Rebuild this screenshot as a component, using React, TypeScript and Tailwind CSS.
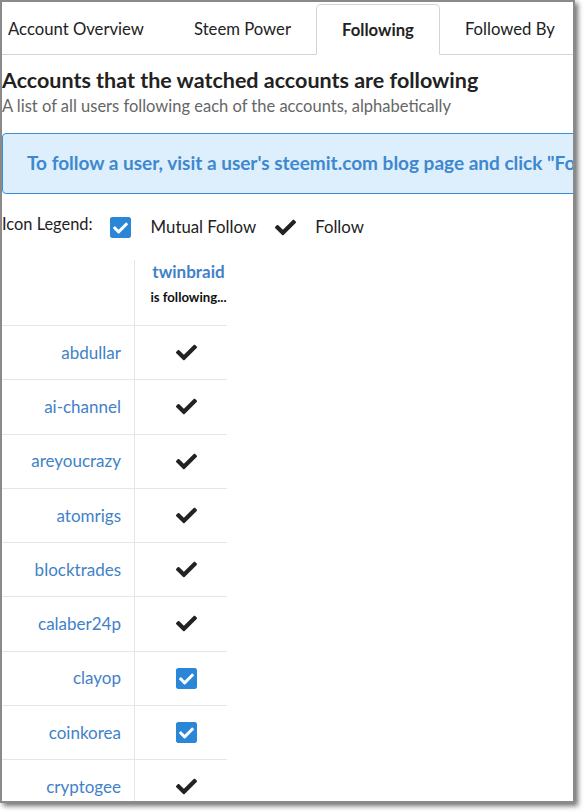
import React from "react";

const CHECK =
  "M173.898 439.404l-166.4-166.4c-9.997-9.997-9.997-26.206 0-36.204l36.203-36.204c9.997-9.998 26.207-9.998 36.204 0L192 312.69 432.095 72.596c9.997-9.997 26.207-9.997 36.204 0l36.203 36.204c9.997 9.997 9.997 26.206 0 36.204l-294.4 294.401c-9.998 9.997-26.207 9.997-36.204-.001z";
const CHECK_SQUARE =
  "M400 480H48c-26.51 0-48-21.49-48-48V80c0-26.51 21.49-48 48-48h352c26.51 0 48 21.49 48 48v352c0 26.51-21.490 48-48 48zm-204.686-98.059l184-184c6.248-6.248 6.248-16.379 0-22.627l-22.627-22.627c-6.248-6.248-16.379-6.249-22.628 0L184 302.745l-70.059-70.059c-6.248-6.248-16.379-6.248-22.628 0l-22.627 22.627c-6.248 6.248-6.248 16.379 0 22.627l104 104c6.249 6.25 16.379 6.25 22.628.001z";

function Check() {
  return (
    <svg width="21" height="21" viewBox="0 0 512 512" className="block">
      <path d={CHECK} fill="#222222" />
    </svg>
  );
}

function CheckSquare() {
  return (
    <svg width="21" height="21" viewBox="0 32 448 448" className="block">
      <path d={CHECK_SQUARE} fill="#2a87d7" />
    </svg>
  );
}

const rows: { name: string; mutual: boolean }[] = [
  { name: "abdullar", mutual: false },
  { name: "ai-channel", mutual: false },
  { name: "areyoucrazy", mutual: false },
  { name: "atomrigs", mutual: false },
  { name: "blocktrades", mutual: false },
  { name: "calaber24p", mutual: false },
  { name: "clayop", mutual: true },
  { name: "coinkorea", mutual: true },
  { name: "cryptogee", mutual: false },
];

export default function App() {
  return (
    <div
      className="w-[584px] h-[812px] bg-white overflow-hidden"
      style={{ fontFamily: "Lato, 'Open Sans', sans-serif" }}
    >
      <div className="w-[575px] h-[803px] border-2 border-[#8a8a8a] shadow-[3px_3px_5px_rgba(0,0,0,0.55)] overflow-hidden bg-white">
        <div className="w-[571px] h-[799px] overflow-hidden text-[#222]">
          {/* Tabs */}
          <div className="flex pt-[2px] border-b border-[#d4d4d4] w-[800px] ml-[-19px] text-[16.7px]">
            <div className="h-[50px] pt-[2px] px-[25px] flex items-center">Account Overview</div>
            <div className="h-[50px] pt-[2px] px-[25px] flex items-center">Steem Power</div>
            <div className="h-[51px] pt-[2px] mb-[-1px] px-[25px] flex items-center font-bold border border-[#d4d4d4] border-b-white rounded-t-[5px] bg-white">
              Following
            </div>
            <div className="h-[50px] pt-[2px] px-[25px] flex items-center">Followed By</div>
          </div>

          {/* Heading */}
          <h1 className="mt-[12px] text-[21.5px] leading-[26px] font-bold text-[#222] whitespace-nowrap">
            Accounts that the watched accounts are following
          </h1>
          <p className="mt-[3px] text-[16.5px] leading-[20px] text-[#666] whitespace-nowrap">
            A list of all users following each of the accounts, alphabetically
          </p>

          {/* Alert */}
          <div className="mt-[17px] w-[800px] h-[61px] flex items-center pl-[24px] bg-[#ddeefc] border border-[#3b8fd9] rounded-[4px] text-[19px] font-bold text-[#3d88cf] whitespace-nowrap">
            To follow a user, visit a user's steemit.com blog page and click "Follow"
          </div>

          {/* Legend */}
          <div className="mt-[21px] h-[24px] flex items-center text-[16.8px] text-[#222] whitespace-nowrap">
            <span className="mb-[5px] text-[16.4px]">Icon Legend:</span>
            <span className="ml-[17px]">
              <CheckSquare />
            </span>
            <span className="ml-[20px]">Mutual Follow</span>
            <span className="ml-[19px]">
              <Check />
            </span>
            <span className="ml-[19px]">Follow</span>
          </div>

          {/* Table */}
          <div className="mt-[21px] w-[225px]">
            <div className="grid grid-cols-[133px_92px] h-[66px] border-b border-[#e6e6e6]">
              <div className="border-r border-[#e6e6e6]" />
              <div className="flex flex-col items-center pl-[15px] pt-[1px]">
                <span className="text-[17px] font-bold text-[#3f82c8] leading-[22px]">twinbraid</span>
                <span className="text-[13.2px] font-bold text-[#111] leading-[18px] mt-[5px] whitespace-nowrap">
                  is following...
                </span>
              </div>
            </div>
            {rows.map((r) => (
              <div
                key={r.name}
                className="grid grid-cols-[133px_92px] h-[54.25px] border-b border-[#e6e6e6]"
              >
                <div className="border-r border-[#e6e6e6] flex items-center justify-end pr-[13px] text-[17px] text-[#3f82c8]">
                  {r.name}
                </div>
                <div className="flex items-center justify-center pl-[10px]">
                  {r.mutual ? <CheckSquare /> : <Check />}
                </div>
              </div>
            ))}
          </div>
        </div>
      </div>
    </div>
  );
}
